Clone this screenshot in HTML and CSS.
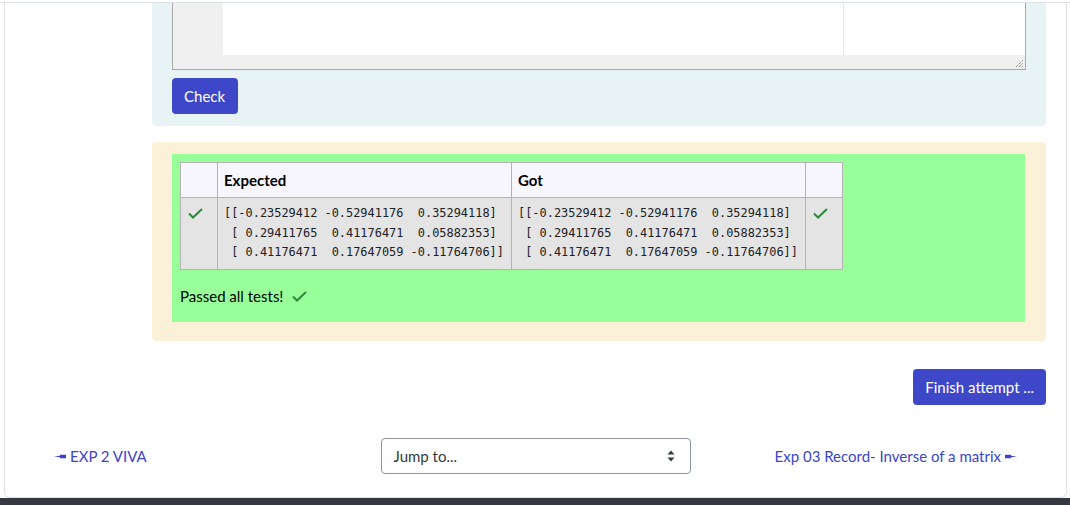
FILE: index.html
```html
<!DOCTYPE html>
<html>
<head>
<meta charset="utf-8">
<link rel="stylesheet" href="styles.css">
</head>
<body>
<div class="topline"></div>
<div class="page">
  <div class="content">
    <div class="formulation">
      <div class="editor">
        <div class="code"></div>
        <div class="hscroll">
          <svg class="grip" width="8" height="8" viewBox="0 0 8 8"><path d="M7.5 0.5 L0.5 7.5 M7.5 3.5 L3.5 7.5 M7.5 6 L6 7.5" stroke="#666" stroke-width="1" stroke-dasharray="1 1" fill="none"/></svg>
        </div>
      </div>
      <button class="btn btn-check">Check</button>
    </div>
    <div class="outcome">
      <div class="feedback">
        <table class="results">
          <thead>
            <tr>
              <th class="c-icon"></th>
              <th class="c-val">Expected</th>
              <th class="c-val">Got</th>
              <th class="c-icon"></th>
            </tr>
          </thead>
          <tbody>
            <tr>
              <td class="c-icon"><svg class="tick" width="15" height="11" viewBox="0 0 15 11"><path d="M1 5.5 L5 9.5 L14 1" stroke="#2b8a3e" stroke-width="2" fill="none"/></svg></td>
              <td class="c-val"><pre>[[-0.23529412 -0.52941176  0.35294118]
 [ 0.29411765  0.41176471  0.05882353]
 [ 0.41176471  0.17647059 -0.11764706]]</pre></td>
              <td class="c-val"><pre>[[-0.23529412 -0.52941176  0.35294118]
 [ 0.29411765  0.41176471  0.05882353]
 [ 0.41176471  0.17647059 -0.11764706]]</pre></td>
              <td class="c-icon"><svg class="tick" width="15" height="11" viewBox="0 0 15 11"><path d="M1 5.5 L5 9.5 L14 1" stroke="#2b8a3e" stroke-width="2" fill="none"/></svg></td>
            </tr>
          </tbody>
        </table>
        <p class="passed">Passed all tests! <svg class="tick-inline" width="15" height="11" viewBox="0 0 15 11"><path d="M1 5.5 L5 9.5 L14 1" stroke="#2b8a3e" stroke-width="2" fill="none"/></svg></p>
      </div>
    </div>
    <div class="submit-row">
      <button class="btn">Finish attempt ...</button>
    </div>
  </div>
  <nav class="activity-nav">
    <a class="nav-link prev" href="#"><svg width="12" height="5" viewBox="0 0 12 5"><polygon points="0,2.5 6,1.8 6,0.8 12,0.8 12,4.2 6,4.2 6,3.2" fill="#3c45c8"/></svg> EXP 2 VIVA</a>
    <div class="jump">
      <span>Jump to...</span>
      <svg width="8" height="12" viewBox="0 0 8 12"><polygon points="4,0.5 7.5,4.5 0.5,4.5" fill="#343a40"/><polygon points="4,11.5 7.5,7.5 0.5,7.5" fill="#343a40"/></svg>
    </div>
    <a class="nav-link next" href="#">Exp 03 Record- Inverse of a matrix <svg width="12" height="5" viewBox="0 0 12 5"><polygon points="12,2.5 6,1.8 6,0.8 0,0.8 0,4.2 6,4.2 6,3.2" fill="#3c45c8"/></svg></a>
  </nav>
</div>
<div class="footer"></div>
</body>
</html>
```

FILE: styles.css
```css
html, body {
  margin: 0;
  padding: 0;
  background: #fff;
}
body {
  font-family: Lato, "Noto Sans", sans-serif;
  font-size: 15px;
  color: #1d2125;
  overflow: hidden;
}
.topline {
  height: 2px;
  border-bottom: 1px solid #dee2e6;
}
.page {
  margin: 0 3px 0 4px;
  border: 1px solid #dee2e6;
  border-top: 0;
  border-radius: 0 0 6px 6px;
  padding-bottom: 23px;
}
.content {
  padding: 0 20px 0 147px;
}
.formulation {
  background: #e7f3f5;
  padding: 0 20px 12px 20px;
  border-radius: 0 0 4px 4px;
}
.editor {
  background: #f0f0f0;
  border: 1px solid #a9a9a9;
  border-top: 0;
}
.code {
  margin-left: 50px;
  height: 52px;
  background: linear-gradient(to right, #fff 620px, #e8e8e8 620px, #e8e8e8 621px, #fff 621px);
}
.hscroll {
  height: 14px;
  display: flex;
  justify-content: flex-end;
  align-items: flex-end;
}
.grip {
  display: block;
  margin: 0 2px 1px 0;
}
.btn {
  display: inline-block;
  height: 36px;
  padding: 0 12px;
  border: 0;
  border-radius: 4px;
  background: #3f47c9;
  color: #fff;
  font-family: Lato, "Noto Sans", sans-serif;
  font-size: 15px;
  line-height: 36px;
}
.btn-check {
  margin-top: 8px;
  display: block;
  padding: 0 13px 0 12px;
}
.outcome {
  margin-top: 16px;
  background: #faf1d8;
  border-radius: 4px;
  padding: 12px 21px 19px 20px;
}
.feedback {
  background: #99ff99;
  padding: 8px 8px 15px 8px;
}
.results {
  border-collapse: collapse;
  border: 1px solid #b3b3b3;
}
.results th, .results td {
  border: 1px solid #b3b3b3;
  text-align: left;
  vertical-align: top;
}
.results th {
  background: #f8f6fd;
  font-weight: bold;
  padding: 6px;
  height: 22px;
  line-height: 22px;
  font-size: 15px;
  color: #000;
}
.results td {
  background: #e4e4e4;
  padding: 6px;
}
.c-icon {
  width: 24px;
}
.c-val {
  width: 281px;
}
.tick {
  display: block;
  margin: 4px 0 0 1px;
}
pre {
  margin: 0;
  font-family: "DejaVu Sans Mono", "Liberation Mono", monospace;
  font-size: 11.93px;
  line-height: 19.5px;
  color: #1d2125;
}
.passed {
  margin: 15px 0 0 0;
  line-height: 22.5px;
  color: #000;
}
.tick-inline {
  vertical-align: 0px;
  margin-left: 5px;
}
.submit-row {
  margin-top: 28px;
  display: flex;
  justify-content: flex-end;
}
.activity-nav {
  margin-top: 33px;
  padding: 0 49px;
  display: grid;
  grid-template-columns: 1fr auto 1fr;
  align-items: center;
}
.nav-link {
  color: #3c45c8;
  text-decoration: none;
  font-size: 15px;
  display: flex;
  align-items: center;
  gap: 4px;
}
.prev {
  justify-self: start;
}
.next {
  justify-self: end;
}
.jump {
  width: 310px;
  height: 36px;
  box-sizing: border-box;
  border: 1px solid #8f959e;
  border-radius: 4px;
  padding: 0 15px 0 12px;
  display: flex;
  align-items: center;
  justify-content: space-between;
  color: #343a40;
  font-size: 15px;
}
.footer {
  height: 7px;
  background: #343a40;
}
```
